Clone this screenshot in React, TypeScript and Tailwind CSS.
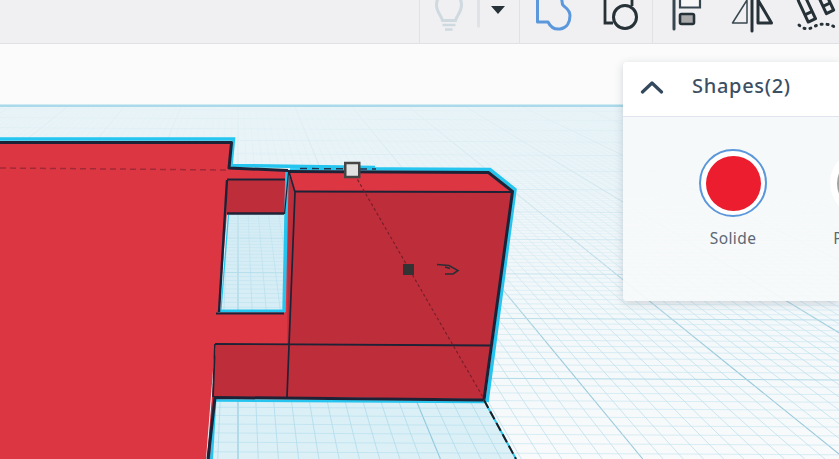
import React from "react";

const VP = { x: 238, y: -31 };

function Grid() {
  const radials = [];
  for (let k = -42; k <= 105; k++) {
    const x107 = VP.x + k * 5.7;
    const xEnd = VP.x + (x107 - VP.x) * (490 / 138);
    const major = k % 10 === 0;
    radials.push(
      <line key={"r" + k} x1={x107} y1={107} x2={xEnd} y2={459} stroke={major ? "#8fc3d6" : "#add9e9"} strokeWidth={major ? 1.1 : 0.8} strokeOpacity={major ? 0.9 : 0.75} />
    );
  }
  const rows = [];
  for (let i = -12; i <= 120; i++) {
    const inv = 0.002445 + 0.000042 * i;
    const y = 1 / inv + VP.y;
    if (y < 107) continue;
    const major = i % 10 === 0;
    rows.push(
      <line key={"h" + i} x1={0} y1={y - 2} x2={839} y2={y + 2} stroke={major ? "#a9d6e5" : "#bfe2ee"} strokeWidth={major ? 1 : 0.8} strokeOpacity={major ? 0.9 : 0.7} />
    );
  }
  return (
    <g>
      {radials}
      {rows}
    </g>
  );
}

function Scene() {
  return (
    <svg className="absolute inset-0 h-full w-full" viewBox="0 44 839 415">
      <defs>
        <linearGradient id="planeFill" x1="0" y1="0" x2="0" y2="1">
          <stop offset="0" stopColor="#ecf5f8" />
          <stop offset="1" stopColor="#f8fafb" />
        </linearGradient>
        <linearGradient id="haze" x1="0" y1="0" x2="0" y2="1">
          <stop offset="0" stopColor="#ecf5f8" stopOpacity="0.85" />
          <stop offset="0.55" stopColor="#f0f6f9" stopOpacity="0.5" />
          <stop offset="1" stopColor="#f4f8fa" stopOpacity="0.05" />
        </linearGradient>
      </defs>
      <rect x="0" y="106" width="839" height="353" fill="url(#planeFill)" />
      <Grid />
      <rect x="0" y="106" width="839" height="240" fill="url(#haze)" />
      <rect x="0" y="104.5" width="839" height="2.5" fill="#a9d9ea" />

      <polygon points="226,213 285,213 284,312 218,312" fill="#6fc6e6" fillOpacity="0.2" />
      <polygon points="212,398 484,400 516,459 206,459" fill="#6fc6e6" fillOpacity="0.2" />

      {/* bright red body with the window cut out */}
      <path fillRule="evenodd" d="M0 142 L231 142 L229 168 L288 170 L290 345 L215 345 L206 459 L0 459 Z M227 213 L285 213 L284 312 L219 312 Z" fill="#dd3643" />
      <polygon points="216,345 289,345 287,397 215,397 212,459 207,459" fill="#be2e3a" />
      <polygon points="227,180 285,180 284,213 227,214" fill="#be2e3a" />

      {/* right block */}
      <polygon points="288,172 295,192 512,192 484,399 287,397" fill="#be2e3a" />
      <polygon points="289,172 488,173 511,192 295,191" fill="#dd3643" />

      {/* cyan silhouette */}
      <path d="M-4 139 L233.5 139 L231 165.5 L375 167.5 M290 168.5 L490 169.5 L515 189.5 L487 402" fill="none" stroke="#25c5ef" strokeWidth="3.5" />
      <path d="M287 172 L284 312" fill="none" stroke="#25c5ef" strokeWidth="3.5" />
      <path d="M218 311 L285 311" stroke="#25c5ef" strokeWidth="3" />
      <path d="M228.5 215 L221 310" stroke="#25c5ef" strokeWidth="1.2" />
      <path d="M214 400.5 L484 402" stroke="#25c5ef" strokeWidth="2.5" />
      <path d="M215 399 L211.5 459" stroke="#25c5ef" strokeWidth="3" />

      {/* dark outlines */}
      <g fill="none" stroke="#1d2236" strokeLinejoin="round">
        <path d="M0 142.5 L231.5 142.5 L229 168 L288 170.5" strokeWidth="3" />
        <path d="M288 171.5 L488.5 172.5 L512.5 191.5 L484 400 L215 397.5 L208 459" strokeWidth="3" />
        <path d="M295 191.5 L512 192" strokeWidth="2" />
        <path d="M289 172 L295 192 L287 397" strokeWidth="1.7" />
        <path d="M288.5 172 L284.5 214" strokeWidth="1.2" />
        <path d="M215 344 L490 345.5" strokeWidth="1.8" />
        <path d="M215 344 L213 397" strokeWidth="1.8" />
        <path d="M227 179.5 L285 179.5" strokeWidth="1.8" />
        <path d="M227 213.5 L284 213.5" strokeWidth="2.4" />
        <path d="M227 180 L219 312" strokeWidth="2.4" />
        <path d="M216 313.5 L284 313.5" strokeWidth="1.8" />
      </g>

      {/* dashes */}
      <path d="M0 168 L228 170" stroke="#a22a36" strokeWidth="1.5" strokeDasharray="6 4" />
      <path d="M300 168.5 L376 169" stroke="#26314a" strokeWidth="1.5" strokeDasharray="7 5" />
      <path d="M352 170 L484 399" stroke="#7a1e2a" strokeWidth="1.2" strokeDasharray="3 2.5" />
      <path d="M484 400 L516 459" stroke="#25c5ef" strokeWidth="2" />
      <path d="M484 400 L516 459" stroke="#1d1d22" strokeWidth="2" strokeDasharray="9 4" />

      {/* handles */}
      <rect x="345.25" y="163" width="14" height="14" fill="#e2e2e2" stroke="#454545" strokeWidth="2.5" />
      <rect x="403" y="264" width="11" height="11" fill="#333333" />
      <path d="M437 264.5 L449 265.5 L458 270.5 L453 274 L445 274 M445 267 L450 268.5" fill="none" stroke="#2d2d33" strokeWidth="1.6" />
    </svg>
  );
}

function Panel() {
  return (
    <div className="absolute right-0 top-[18px] h-[239px] w-[216px] overflow-hidden rounded-l-[4px] shadow-[0_2px_8px_rgba(60,70,90,0.22)]">
      <div className="flex h-[55px] items-center border-b border-[#e1e3ee] bg-white">
        <svg className="ml-[17px] h-[14px] w-[24px] -translate-y-[2px]" viewBox="0 0 24 14">
          <path d="M2.5 12 L12 3 L21.5 12" fill="none" stroke="#34495e" strokeWidth="3.2" strokeLinecap="round" strokeLinejoin="round" />
        </svg>
        <span className="ml-[28px] -translate-y-[3px] text-[20px] font-medium leading-none tracking-[0.7px] text-[#3d4f63] [font-family:'Noto_Sans',sans-serif]">Shapes(2)</span>
      </div>
      <div className="flex h-[184px] gap-[63px] bg-[#f7f9fa]/90 pl-[76px] pt-[32px]">
        <div className="flex w-[68px] shrink-0 flex-col items-center">
          <div className="flex h-[68px] w-[68px] items-center justify-center rounded-full border-2 border-[#5b97db] bg-white">
            <div className="h-[55px] w-[55px] rounded-full bg-[#ec1d2e]" />
          </div>
          <span className="mt-[11px] text-[15.5px] leading-[20px] tracking-[0.4px] text-[#5c6875] [font-family:'Noto_Sans',sans-serif]">Solide</span>
        </div>
        <div className="flex w-[68px] shrink-0 flex-col items-center">
          <div className="flex h-[68px] w-[68px] items-center justify-center rounded-full bg-white">
            <div className="h-[55px] w-[55px] rounded-full bg-[#a3a3a3]" />
          </div>
          <span className="mt-[11px] text-[15.5px] leading-[20px] tracking-[0.4px] text-[#5c6875] [font-family:'Noto_Sans',sans-serif]">Perçage</span>
        </div>
      </div>
    </div>
  );
}

function Header() {
  return (
    <div className="flex h-[44px] shrink-0 border-b border-[#e0e1e5] bg-[#f0f0f2]">
      <div className="flex-1" />
      <div className="h-full w-[100px] shrink-0 border-l border-[#e0e1e5]">
        <svg className="h-[43px] w-[99px]" viewBox="420 0 99 43">
          <path d="M442.5 20.5 C441 15 436.5 12 436.5 5 C436.5 -3 441 -6 449 -6 C457 -6 461.5 -3 461.5 5 C461.5 12 457 15 455.5 20.5 Z" fill="none" stroke="#cfd9e0" strokeWidth="3" />
          <path d="M442.5 25 H455.5" stroke="#cfd9e0" strokeWidth="2.5" />
          <path d="M445 29.5 H452.5" stroke="#cfd9e0" strokeWidth="2.5" />
          <rect x="477" y="0" width="3" height="27.5" fill="#dfe3e7" />
          <polygon points="491,6 505,6 498,14" fill="#263238" />
        </svg>
      </div>
      <div className="h-full w-[133px] shrink-0 border-l border-[#e0e1e5]">
        <svg className="h-[43px] w-[132px]" viewBox="520 0 132 43">
          <path d="M537.5 -2 V22 H548 C551 28 556 29.5 560 29 C567 28 570 22 570 15.5 C570 9 564 7 562.5 4.5 L561.5 -2" fill="none" stroke="#5b97db" strokeWidth="3" strokeLinejoin="round" />
          <path d="M605 -2 V23 H613 M632 -2 V6" fill="none" stroke="#263238" strokeWidth="2.8" />
          <circle cx="625" cy="17" r="11.5" fill="none" stroke="#263238" strokeWidth="3" />
        </svg>
      </div>
      <div className="h-full w-[187px] shrink-0 border-l border-[#e0e1e5]">
        <svg className="h-[43px] w-[186px]" viewBox="653 0 186 43">
          <path d="M674 -2 V29" stroke="#37474f" strokeWidth="3" strokeLinecap="round" />
          <path d="M680 -2 V7.5 H700 V-2" fill="#f7f7f8" stroke="#37474f" strokeWidth="2.2" />
          <rect x="680" y="14" width="14" height="10" rx="1.5" fill="#a9a9a9" stroke="#263238" strokeWidth="2.6" />
          <path d="M752 -2 V31" stroke="#263238" strokeWidth="3" strokeLinecap="round" />
          <path d="M747 0 V23 H732.5 Z" fill="none" stroke="#37474f" strokeWidth="1.5" strokeLinejoin="round" />
          <path d="M758 0 V23 H771.5 Z" fill="none" stroke="#263238" strokeWidth="3" strokeLinejoin="round" />
          <g transform="translate(812.5 -2) rotate(-25)" fill="none" stroke="#263238" strokeWidth="3" strokeLinejoin="round">
            <path d="M-14 20 V-2 A14 14 0 0 1 14 -2 V20 H6 V-2 A6 6 0 0 0 -6 -2 V20 Z" />
            <path d="M-14 12 H-6 M6 12 H14" />
          </g>
          <path d="M799 25 C803 29 808 30 813 27 C819 24 826 22 837 28" fill="none" stroke="#263238" strokeWidth="3" strokeLinecap="round" strokeDasharray="1 5" />
        </svg>
      </div>
    </div>
  );
}

export default function App() {
  return (
    <div className="flex h-[459px] w-[839px] flex-col overflow-hidden bg-[#fbfbfb]">
      <Header />
      <div className="relative flex-1">
        <Scene />
        <Panel />
      </div>
    </div>
  );
}
